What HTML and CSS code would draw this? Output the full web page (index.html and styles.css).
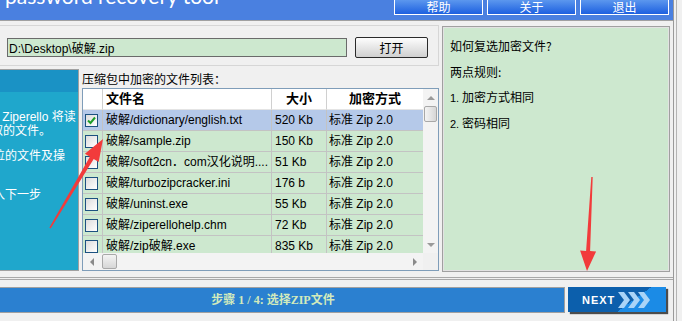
FILE: index.html
```html
<!DOCTYPE html>
<html lang="zh-CN">
<head>
    <meta charset="UTF-8">
    <meta name="viewport" content="width=device-width, initial-scale=1.0">
    <title>Ziperello</title>
    <link rel="stylesheet" href="styles.css">
</head>
<body>
<div class="window">
    <header class="titlebar">
        <span class="title">password recovery tool</span>
        <nav class="menu">
            <button>帮助</button>
            <button>关于</button>
            <button>退出</button>
        </nav>
    </header>

    <main class="main">
        <section class="left">
            <div class="pathbox">
                <input class="path" value="D:\Desktop\破解.zip">
                <button class="open">打开</button>
            </div>

            <div class="lower">
                <aside class="side">
                    <div class="side-head"></div>
                    <p class="note n1">&nbsp;Ziperello 将读</p>
                    <p class="note n2">取的文件。</p>
                    <p class="note n3">位的文件及操</p>
                    <p class="note n4">入下一步</p>
                </aside>

                <div class="files">
                    <p class="caption">压缩包中加密的文件列表：</p>
                    <div class="grid">
                        <div class="grid-top">
                            <div class="list">
                                <div class="row head">
                                    <span class="cell"></span>
                                    <span class="cell name">文件名</span>
                                    <span class="cell mid">大小</span>
                                    <span class="cell mid">加密方式</span>
                                </div>
                                <div class="row selected">
                                    <span class="cell"><i class="box"><svg width="11" height="11" viewBox="0 0 11 11"><path d="M2 5.5 L4.5 8 L9 2.5" fill="none" stroke="#1f9d2a" stroke-width="2"/></svg></i></span>
                                    <span class="cell name">破解/dictionary/english.txt</span>
                                    <span class="cell size">520 Kb</span>
                                    <span class="cell mode">标准 Zip 2.0</span>
                                </div>
                                <div class="row">
                                    <span class="cell"><i class="box"></i></span>
                                    <span class="cell name">破解/sample.zip</span>
                                    <span class="cell size">150 Kb</span>
                                    <span class="cell mode">标准 Zip 2.0</span>
                                </div>
                                <div class="row">
                                    <span class="cell"><i class="box"></i></span>
                                    <span class="cell name">破解/soft2cn．com汉化说明....</span>
                                    <span class="cell size">51 Kb</span>
                                    <span class="cell mode">标准 Zip 2.0</span>
                                </div>
                                <div class="row">
                                    <span class="cell"><i class="box"></i></span>
                                    <span class="cell name">破解/turbozipcracker.ini</span>
                                    <span class="cell size">176 b</span>
                                    <span class="cell mode">标准 Zip 2.0</span>
                                </div>
                                <div class="row">
                                    <span class="cell"><i class="box"></i></span>
                                    <span class="cell name">破解/uninst.exe</span>
                                    <span class="cell size">55 Kb</span>
                                    <span class="cell mode">标准 Zip 2.0</span>
                                </div>
                                <div class="row">
                                    <span class="cell"><i class="box"></i></span>
                                    <span class="cell name">破解/ziperellohelp.chm</span>
                                    <span class="cell size">72 Kb</span>
                                    <span class="cell mode">标准 Zip 2.0</span>
                                </div>
                                <div class="row">
                                    <span class="cell"><i class="box"></i></span>
                                    <span class="cell name">破解/zip破解.exe</span>
                                    <span class="cell size">835 Kb</span>
                                    <span class="cell mode">标准 Zip 2.0</span>
                                </div>
                            </div>
                            <div class="vscroll">
                                <span class="btn"><i class="tri up"></i></span>
                                <span class="thumb"></span>
                                <span class="track"></span>
                                <span class="btn"><i class="tri down"></i></span>
                            </div>
                        </div>
                        <div class="hscroll">
                            <span class="btn"><i class="tri lft"></i></span>
                            <span class="thumb"></span>
                            <span class="track"></span>
                            <span class="btn"><i class="tri rgt"></i></span>
                            <span class="corner"></span>
                        </div>
                    </div>
                </div>
            </div>
        </section>

        <section class="tips">
            <p>如何复选加密文件?</p>
            <p>两点规则:</p>
            <p><span class="num">1.</span> 加密方式相同</p>
            <p><span class="num">2.</span> 密码相同</p>
        </section>
    </main>

    <footer class="footer">
        <div class="step">步骤 1 / 4: 选择ZIP文件</div>
        <button class="next">NEXT
            <svg width="34" height="16" viewBox="0 0 34 16">
                <polygon points="0,0 6,0 12,8 6,16 0,16 6,8" fill="#a9d4f7"/>
                <polygon points="10,0 16,0 22,8 16,16 10,16 16,8" fill="#a9d4f7"/>
                <polygon points="20,0 26,0 32,8 26,16 20,16 26,8" fill="#a9d4f7"/>
            </svg>
        </button>
    </footer>
</div>

<!-- red hint arrows drawn over the window -->
<svg class="arrows" width="682" height="321" viewBox="0 0 682 321">
    <polygon points="49.4,227.6 89.9,156.8 84.9,153.8 103,139 98.7,162 93.7,159 50.6,228.4" fill="#f23b3b"/>
    <polygon points="591.3,177 586.1,250.9 580.1,250.6 587,271 596.1,251.4 590.1,251.1 592.7,177" fill="#f23b3b"/>
</svg>
</body>
</html>
```

FILE: styles.css
```css
* {
    box-sizing: border-box;
}

body {
    margin: 0;
    width: 682px;
    height: 321px;
    overflow: hidden;
    position: relative;
    background-color: #f0f0f0;
    font-family: "Liberation Sans", "Noto Sans CJK SC", sans-serif;
    font-size: 12px;
    color: #000;
}

p {
    margin: 0;
}

.window {
    width: 674px;
    height: 321px;
    border-right: 1px solid #9a9a9a;
    box-shadow: 2px 0 0 #f0f0f0, 3px 0 0 #b4b4b4;
}

/* top blue bar */
.titlebar {
    height: 20px;
    background-color: #4a80e0;
    display: flex;
    justify-content: space-between;
    overflow: hidden;
}

.title {
    color: #fff;
    font-family: Lato, "DejaVu Sans", sans-serif;
    font-size: 21px;
    line-height: 26px;
    margin: -17px 0 0 5px;
    white-space: nowrap;
}

.menu {
    display: flex;
    gap: 4px;
    margin-right: 4px;
}

.menu button {
    width: 89px;
    height: 15px;
    padding: 0;
    border: 1px solid #fff;
    border-top: none;
    background: linear-gradient(#5c97ee, #1d60e0);
    color: #fff;
    font-family: "Noto Sans CJK SC", sans-serif;
    font-size: 12px;
    line-height: 14px;
}

/* middle area */
.main {
    height: 257px;
    display: flex;
    align-items: flex-start;
    border-top: 1px solid #a0a0a0;
    padding-top: 4px;
}

.left {
    width: 439px;
}

.pathbox {
    height: 41px;
    display: flex;
    align-items: flex-start;
    padding: 11px 0 0 7px;
    border: 1px solid #d6d6d6;
    border-left: none;
}

.path {
    width: 340px;
    height: 19px;
    margin-top: 1px;
    padding: 0 1px;
    border: 1px solid #6a6a6a;
    background-color: #cde8cf;
    font-family: "Liberation Sans", "Noto Sans CJK SC", sans-serif;
    font-size: 12px;
    color: #000;
}

.open {
    width: 73px;
    height: 21px;
    margin-left: 8px;
    padding: 0;
    border: 1px solid #2a2a2a;
    border-radius: 2px;
    background: linear-gradient(#fdfdfd, #d0d0d0);
    font-family: "Noto Sans CJK SC", sans-serif;
    font-size: 12px;
}

.lower {
    display: flex;
    margin-top: 3px;
}

/* cyan info panel, mostly cut off at the left */
.side {
    width: 79px;
    height: 202px;
    background-color: #1fa7cc;
    border: 1px solid #a0a0a0;
    border-left: none;
    overflow: hidden;
    color: #fff;
    white-space: nowrap;
}

.side-head {
    height: 22px;
    background-color: #1a92c5;
}

.note {
    line-height: 14px;
}

.n1 {
    margin-top: 18px;
    margin-left: -1px;
}

.n2 {
    margin-left: -9px;
}

.n3 {
    margin-top: 11px;
    margin-left: -7px;
}

.n4 {
    margin-top: 25px;
    margin-left: -7px;
}

.files {
    margin-left: 3px;
}

.caption {
    height: 19px;
    line-height: 19px;
    font-family: "Noto Sans CJK SC", sans-serif;
}

/* file list */
.grid {
    width: 357px;
    height: 183px;
    border: 1px solid #7f9db9;
    background-color: #fff;
}

.grid-top {
    display: flex;
    height: 164px;
}

.list {
    width: 340px;
    overflow: hidden;
}

.row {
    display: grid;
    grid-template-columns: 20px 169px 55px 96px;
    height: 21px;
    background-color: #cde8cf;
}

.row.head {
    background-color: #fff;
    font-weight: bold;
    font-size: 13px;
}

.row.selected {
    background-color: #b5c9e9;
}

.cell {
    border-right: 1px solid #c3c3c3;
    border-bottom: 1px solid #c3c3c3;
    line-height: 20px;
    white-space: nowrap;
    overflow: hidden;
}

.head .cell {
    border-bottom-color: #e4e4e4;
    border-right-color: #d0d0d0;
}

.cell:last-child {
    border-right: none;
}

.name {
    padding-left: 3px;
}

.size {
    padding-left: 3px;
}

.mode {
    padding-left: 2px;
}

.mid {
    text-align: center;
}

.box {
    display: block;
    width: 13px;
    height: 13px;
    margin: 4px 0 0 2px;
    border: 1px solid #1c5180;
    background: linear-gradient(135deg, #dcdcdc, #fff);
}

.box svg {
    display: block;
}

/* scrollbars */
.vscroll {
    width: 15px;
    display: flex;
    flex-direction: column;
    background-color: #f3f3f3;
}

.hscroll {
    height: 17px;
    display: flex;
    background-color: #f3f3f3;
}

.btn {
    width: 15px;
    height: 17px;
    display: flex;
    align-items: center;
    justify-content: center;
}

.vscroll .thumb {
    height: 16px;
    margin: 0 1px;
    border: 1px solid #a8a8a8;
    border-radius: 2px;
    background: linear-gradient(90deg, #f4f4f4, #d6d6d6);
}

.hscroll .btn {
    width: 17px;
}

.hscroll .thumb {
    width: 15px;
    margin: 1px 0 1px 2px;
    border: 1px solid #a8a8a8;
    border-radius: 2px;
    background: linear-gradient(#f4f4f4, #d6d6d6);
}

.track {
    flex: 1;
}

.corner {
    width: 15px;
    background-color: #f0f0f0;
}

.tri {
    width: 0;
    height: 0;
    border: 4px solid transparent;
}

.tri.up {
    border-bottom-color: #9a9a9a;
    border-top-width: 0;
}

.tri.down {
    border-top-color: #9a9a9a;
    border-bottom-width: 0;
}

.tri.lft {
    border-right-color: #8a8a8a;
    border-left-width: 0;
}

.tri.rgt {
    border-left-color: #8a8a8a;
    border-right-width: 0;
}

/* right hint panel */
.tips {
    width: 228px;
    height: 246px;
    margin: 1px 0 0 3px;
    padding: 6px 7px;
    border: 1px solid #a0a0a0;
    box-shadow: inset 0 0 0 1px #e2e2e2;
    background-color: #cde8cf;
    font-family: "Noto Sans CJK SC", sans-serif;
}

.tips p {
    height: 25.5px;
    line-height: 25px;
}

.num {
    font-family: "Liberation Sans", sans-serif;
    font-size: 11px;
}

/* bottom step bar */
.footer {
    display: flex;
    align-items: flex-start;
    border-top: 3px double #a8a8a8;
    padding-top: 7px;
}

.step {
    width: 565px;
    height: 26px;
    padding-right: 18px;
    border: 1px solid #a0a0a0;
    border-left: none;
    background-color: #2b80d0;
    color: #d2eabc;
    font-family: "Liberation Serif", "Noto Sans CJK SC", serif;
    font-weight: bold;
    font-size: 12px;
    line-height: 24px;
    text-align: center;
}

.next {
    width: 98px;
    height: 25px;
    margin-left: 3px;
    padding: 0 0 0 14px;
    border: none;
    display: flex;
    align-items: center;
    gap: 3px;
    background: linear-gradient(144deg, #0c5fac 63%, #1b8be6 63%);
    box-shadow: 2px 2px 1px #4c4c4c;
    color: #fff;
    font-family: "Liberation Sans", sans-serif;
    font-weight: bold;
    font-size: 11px;
    letter-spacing: 1px;
}

.arrows {
    position: absolute;
    top: 0;
    left: 0;
    pointer-events: none;
}
```
